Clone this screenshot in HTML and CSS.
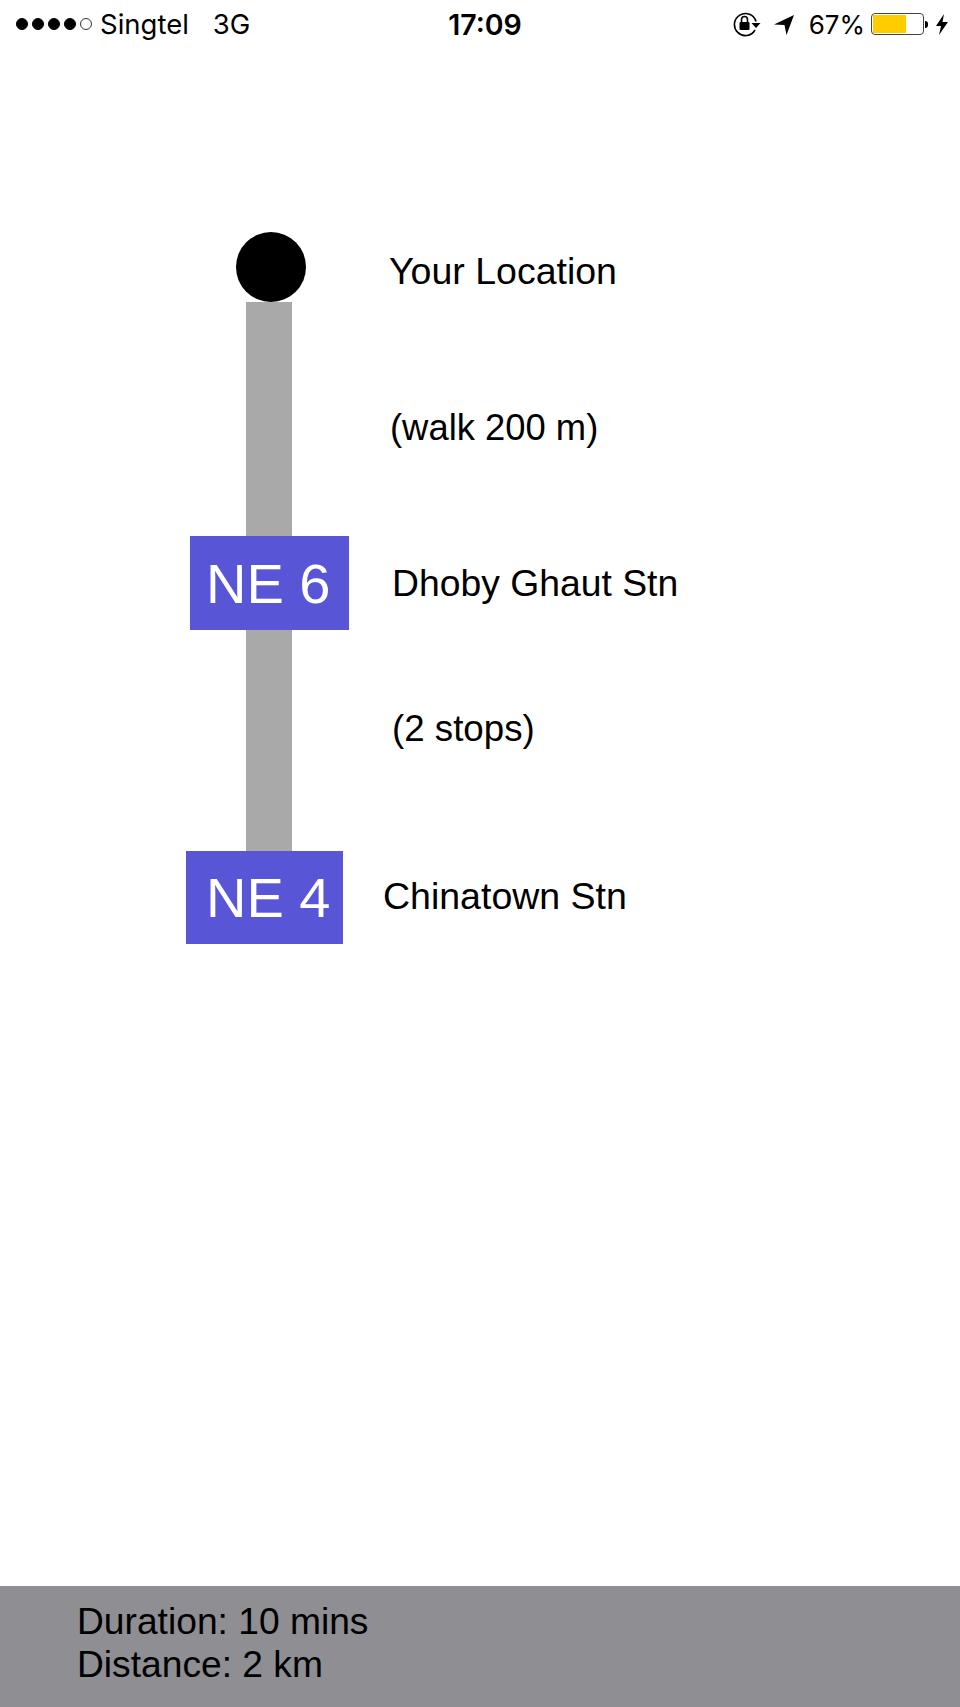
FILE: index.html
```html
<!DOCTYPE html>
<html>
<head>
  <meta charset="UTF-8">
  <title>Route</title>
  <link rel="stylesheet" href="styles.css">
</head>
<body>
  <!-- Status bar -->
  <div class="status-bar">
    <div class="status-left">
      <span class="signal">
        <i class="dot"></i><i class="dot"></i><i class="dot"></i><i class="dot"></i><i class="dot empty"></i>
      </span>
      <span class="carrier">Singtel</span>
      <span class="network">3G</span>
    </div>
    <div class="status-time">17:09</div>
    <div class="status-right">
      <svg class="icon-lock" width="32" height="26" viewBox="0 0 32 26">
        <path d="M24 19A11 11 0 1 1 25 10.500" fill="none" stroke="#000" stroke-width="1.600"/>
        <path d="M20.500 12h9l-4.500 5z" fill="#000"/>
        <rect x="8.500" y="11" width="10" height="8" rx="1" fill="#000"/>
        <path d="M10.500 11V8.500a3 3 0 0 1 6 0V11" fill="none" stroke="#000" stroke-width="1.600"/>
      </svg>
      <svg class="icon-arrow" width="20" height="21" viewBox="0 0 20 21">
        <path d="M0 10.500 20 1 12.500 21 10.500 11z" fill="#000"/>
      </svg>
      <span class="battery-text">67%</span>
      <div class="battery">
        <div class="battery-level" style="width: 67%"></div>
      </div>
      <i class="battery-nub"></i>
      <svg class="icon-bolt" width="12" height="21" viewBox="0 0 12 21">
        <path d="M8 0 0 12h5l-2 9 9-13H6.500z" fill="#000"/>
      </svg>
    </div>
  </div>

  <!-- Route -->
  <div class="route">
    <div class="row row-start">
      <div class="start-dot"></div>
      <div class="label label-start">Your Location</div>
    </div>
    <div class="row row-walk">
      <div class="track"></div>
      <div class="label label-walk">(walk 200 m)</div>
    </div>
    <div class="row row-dhoby">
      <div class="badge badge-dhoby">NE 6</div>
      <div class="label label-dhoby">Dhoby Ghaut Stn</div>
    </div>
    <div class="row row-stops">
      <div class="track"></div>
      <div class="label label-stops">(2 stops)</div>
    </div>
    <div class="row row-china">
      <div class="badge badge-china">NE 4</div>
      <div class="label label-china">Chinatown Stn</div>
    </div>
  </div>

  <!-- Summary -->
  <div class="summary">
    <div>Duration: 10 mins</div>
    <div>Distance: 2 km</div>
  </div>
</body>
</html>
```

FILE: styles.css
```css
:root {
  --badge-color: #5856d6;
  --track-color: #a9a9a9;
  --footer-color: #8e8e93;
}
body {
  margin: 0;
  height: 1707px;
  display: flex;
  flex-direction: column;
  background: #fff;
  color: #000;
  font-family: 'Liberation Sans', Arial, sans-serif;
  overflow: hidden;
}
/* Status bar */
.status-bar {
  height: 48px;
  display: flex;
  align-items: center;
  padding: 0 12px 0 16px;
  font-family: Inter, 'Liberation Sans', sans-serif;
  font-size: 26px;
}
.status-left {
  flex: 1;
  display: flex;
  align-items: center;
  font-size: 27.500px;
}
.signal {
  display: flex;
  gap: 4px;
  margin-right: 8px;
}
.dot {
  width: 12px;
  height: 12px;
  border-radius: 50%;
  background: #000;
  border: 1px solid #000;
  box-sizing: border-box;
}
.dot.empty {
  background: #fff;
  border-color: #333;
}
.network {
  margin-left: 24px;
}
.status-time {
  font-weight: 600;
  font-size: 28.500px;
  margin-left: 6px;
}
.status-right {
  flex: 1;
  display: flex;
  align-items: center;
  justify-content: flex-end;
}
.icon-lock {
  margin-right: 11px;
}
.icon-arrow {
  margin-right: 15px;
}
.battery-text {
  margin-right: 6px;
}
.battery {
  width: 53px;
  height: 22px;
  box-sizing: border-box;
  border: 1px solid #444;
  border-radius: 4px;
  padding: 1px;
}
.battery-level {
  height: 100%;
  background: #ffcc00;
}
.battery-nub {
  width: 3px;
  height: 7px;
  background: #000;
  border-radius: 0 3px 3px 0;
  margin: 0 8px 0 1px;
}
/* Route diagram */
.route {
  flex: 1;
  padding-top: 184px;
}
.row {
  display: flex;
  align-items: center;
}
.label {
  font-size: 37px;
  white-space: nowrap;
}
.start-dot {
  position: relative;
  z-index: 1;
  width: 70px;
  height: 70px;
  border-radius: 50%;
  background: #000;
  margin-left: 236px;
}
.label-start {
  font-size: 37.500px;
  margin: 8px 0 0 83px;
}
.track {
  width: 46px;
  background: var(--track-color);
  margin-left: 246px;
}
.row-walk .track {
  height: 234px;
}
.label-walk {
  font-size: 36.400px;
  margin: 18px 0 0 98px;
}
.row-stops .track {
  height: 221px;
}
.label-stops {
  font-size: 36.700px;
  margin: 0 0 24px 100px;
}
.badge {
  background: var(--badge-color);
  color: #fff;
  font-size: 56px;
  box-sizing: border-box;
  display: flex;
  align-items: center;
}
.badge-dhoby {
  width: 159px;
  height: 94px;
  padding-left: 16px;
  margin-left: 190px;
}
.label-dhoby {
  font-size: 37.300px;
  margin-left: 43px;
}
.badge-china {
  width: 157px;
  height: 93px;
  padding-left: 20px;
  margin-left: 186px;
}
.label-china {
  font-size: 37.500px;
  margin: 0 0 2px 40px;
}
/* Summary footer */
.summary {
  height: 121px;
  box-sizing: border-box;
  background: var(--footer-color);
  padding: 14px 0 0 77px;
  font-size: 37.200px;
  line-height: 43px;
}
```
